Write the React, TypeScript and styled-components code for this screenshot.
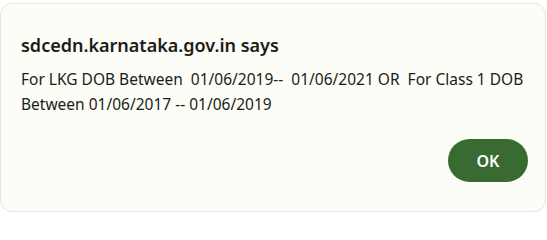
import { createGlobalStyle, styled } from "styled-components";

const GlobalStyle = createGlobalStyle`
  html, body {
    margin: 0;
    padding: 0;
    background: #ffffff;
    overflow: hidden;
  }
  body {
    font-family: "Noto Sans", "Open Sans", sans-serif;
  }
`;

const Dialog = styled.div`
  box-sizing: border-box;
  width: 546px;
  height: 209px;
  margin: 3px 0 0 0;
  padding: 28px 20px 0 20px;
  background-color: #fbfdf6;
  border: 1px solid #e4e6e0;
  border-radius: 12px;
  display: flex;
  flex-direction: column;
`;

const Title = styled.h2`
  margin: 0;
  font-size: 18px;
  font-weight: 600;
  color: #1b1c18;
  line-height: 26px;
`;

const Message = styled.p`
  margin: 9px 0 0 0;
  font-size: 15.5px;
  line-height: 25px;
  color: #1b1c18;
  white-space: pre-wrap;
`;

const Actions = styled.div`
  display: flex;
  justify-content: flex-end;
  margin-top: 22px;
`;

const OkButton = styled.button`
  width: 80px;
  height: 43px;
  border: none;
  border-radius: 22px;
  background-color: #386a32;
  color: #ffffff;
  font-family: "Noto Sans", "Open Sans", sans-serif;
  font-size: 16px;
  font-weight: 600;
  cursor: pointer;
  margin-right: -3px;
`;

export default function App() {
  return (
    <>
      <GlobalStyle />
      <Dialog>
        <Title>sdcedn.karnataka.gov.in says</Title>
        <Message>
          {"For LKG DOB Between  01/06/2019--  01/06/2021 OR  For Class 1 DOB Between 01/06/2017 -- 01/06/2019"}
        </Message>
        <Actions>
          <OkButton>OK</OkButton>
        </Actions>
      </Dialog>
    </>
  );
}
